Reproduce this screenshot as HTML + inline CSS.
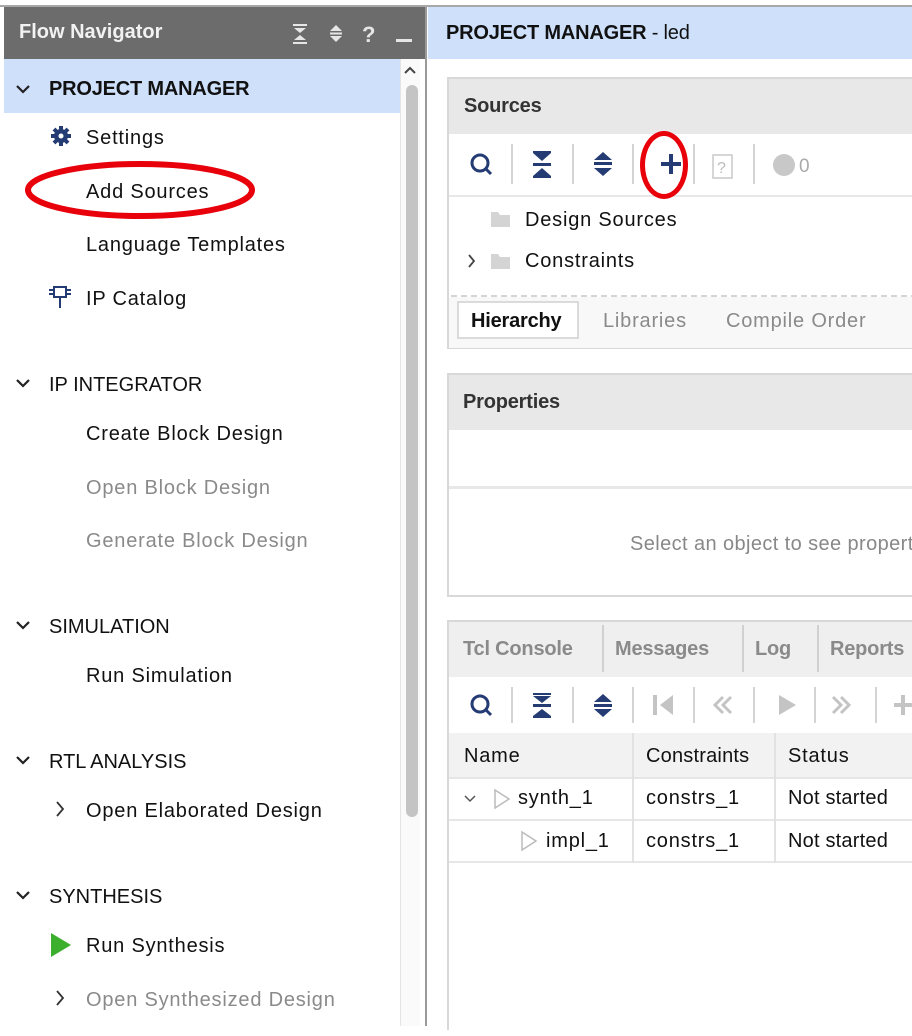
<!DOCTYPE html>
<html><head><style>
*{margin:0;padding:0;box-sizing:border-box}
body{width:912px;height:1036px;background:#fff;position:relative;overflow:hidden;font-family:"Liberation Sans",sans-serif;color:#111}
.a{position:absolute;white-space:nowrap}
.t{font-size:20px;letter-spacing:0.8px}
.b{font-weight:bold;letter-spacing:-0.2px}
.g{color:#8a8a8a}
</style></head><body>
<div class="a" style="left:0;top:5px;width:912px;height:2px;background:#a8a8a8"></div>
<div class="a" style="left:4px;top:7px;width:423px;height:52px;background:#6c6c6c"></div>
<div class="a" style="left:19px;top:21px;font-size:20px;font-weight:bold;color:#f2f2f2">Flow Navigator</div>
<svg class="a" style="left:290px;top:22px" width="130" height="24">
<g fill="#e6e6e6"><rect x="3" y="2" width="14" height="2"/><polygon points="4,6 16,6 10,11"/><polygon points="4,18 16,18 10,13"/><rect x="3" y="20" width="14" height="2"/>
<polygon points="46,3 52,9 40,9"/><rect x="40" y="10.5" width="12" height="2"/><polygon points="46,20 52,14 40,14"/></g>
<text x="72" y="20" font-size="22" font-weight="bold" fill="#e6e6e6" font-family="Liberation Sans">?</text>
<rect x="106" y="17" width="16" height="3" fill="#e6e6e6"/></svg>
<div class="a" style="left:4px;top:59px;width:396px;height:54px;background:#cfe0fb"></div>
<div class="a" style="left:400px;top:59px;width:20px;height:970px;background:#fafafa;border-left:1px solid #e4e4e4"></div>
<div class="a" style="left:406px;top:85px;width:12px;height:732px;border-radius:6px;background:#c4c4c4"></div>
<svg class="a" style="left:402px;top:64px" width="16" height="12"><polyline points="3,9 8,4 13,9" fill="none" stroke="#444" stroke-width="2"/></svg>
<div class="a" style="left:425px;top:7px;width:2px;height:1022px;background:#9a9a9a"></div>
<svg class="a" style="left:0;top:0" width="400" height="1036">
<g fill="none" stroke="#222" stroke-width="2.2">
<polyline points="17,86 23,92 29,86"/><polyline points="17,380 23,386 29,380"/><polyline points="17,622 23,628 29,622"/><polyline points="17,757 23,763 29,757"/><polyline points="17,892 23,898 29,892"/>
</g>
<g fill="none" stroke="#333" stroke-width="1.8"><polyline points="57,802 63,809 57,816"/><polyline points="57,991 63,998 57,1005"/></g>
<polygon points="51,933 71,945 51,957" fill="#3cb02e"/>
<g fill="#243c73"><circle cx="61" cy="136" r="7"/><g stroke="#243c73" stroke-width="4"><line x1="61" y1="126" x2="61" y2="146"/><line x1="51" y1="136" x2="71" y2="136"/><line x1="54" y1="129" x2="68" y2="143"/><line x1="68" y1="129" x2="54" y2="143"/></g><circle cx="61" cy="136" r="2.5" fill="#fff"/></g>
<g fill="none" stroke="#243c73" stroke-width="2"><rect x="54" y="287" width="12" height="10"/><line x1="60" y1="297" x2="60" y2="308"/><line x1="49" y1="290" x2="54" y2="290"/><line x1="49" y1="294" x2="54" y2="294"/><line x1="66" y1="290" x2="71" y2="290"/><line x1="66" y1="294" x2="71" y2="294"/></g>
<ellipse cx="140" cy="190" rx="112" ry="26" fill="none" stroke="#e8000b" stroke-width="6"/>
</svg>
<div class="a t b" style="left:49px;top:78px">PROJECT MANAGER</div>
<div class="a t" style="left:86px;top:127px">Settings</div>
<div class="a t" style="left:86px;top:181px">Add Sources</div>
<div class="a t" style="left:86px;top:234px">Language Templates</div>
<div class="a t" style="left:86px;top:288px">IP Catalog</div>
<div class="a t" style="left:49px;top:374px;letter-spacing:0">IP INTEGRATOR</div>
<div class="a t" style="left:86px;top:423px">Create Block Design</div>
<div class="a t g" style="left:86px;top:477px">Open Block Design</div>
<div class="a t g" style="left:86px;top:530px">Generate Block Design</div>
<div class="a t" style="left:49px;top:616px;letter-spacing:0">SIMULATION</div>
<div class="a t" style="left:86px;top:665px">Run Simulation</div>
<div class="a t" style="left:49px;top:751px;letter-spacing:0">RTL ANALYSIS</div>
<div class="a t" style="left:86px;top:800px">Open Elaborated Design</div>
<div class="a t" style="left:49px;top:886px;letter-spacing:0">SYNTHESIS</div>
<div class="a t" style="left:86px;top:935px">Run Synthesis</div>
<div class="a t g" style="left:86px;top:989px">Open Synthesized Design</div>
<div class="a" style="left:0;top:1026px;width:430px;height:10px;background:#fff"></div>

<div class="a" style="left:428px;top:7px;width:484px;height:52px;background:#cfe0fb"></div>
<div class="a t b" style="left:446px;top:22px">PROJECT MANAGER <span style="font-weight:normal">- led</span></div>

<div class="a" style="left:447px;top:77px;width:470px;height:272px;border:2px solid #d8d8d8;background:#fff"></div>
<div class="a" style="left:449px;top:79px;width:463px;height:55px;background:#e8e8e8"></div>
<div class="a t b" style="left:464px;top:95px;color:#333">Sources</div>
<div class="a" style="left:449px;top:195px;width:463px;height:2px;background:#e8e8e8"></div>
<svg class="a" style="left:449px;top:134px" width="463" height="214">
<g stroke="#d4d4d4" stroke-width="2"><line x1="63" y1="10" x2="63" y2="50"/><line x1="124" y1="10" x2="124" y2="50"/><line x1="184" y1="10" x2="184" y2="50"/><line x1="245" y1="10" x2="245" y2="50"/><line x1="305" y1="10" x2="305" y2="50"/></g>
<g fill="none" stroke="#243c73" stroke-width="3"><circle cx="31" cy="29" r="8"/><line x1="37" y1="35" x2="42" y2="40"/></g>
<g fill="#243c73"><polygon points="84,19 102,19 93,27"/><rect x="84" y="29" width="18" height="3"/><polygon points="84,42 102,42 93,34"/><rect x="84" y="17" width="18" height="2"/><rect x="84" y="42" width="18" height="2"/>
<polygon points="154,18 163,26 145,26"/><rect x="145" y="28" width="18" height="3"/><polygon points="154,42 163,34 145,34"/>
<rect x="212" y="28" width="20" height="4"/><rect x="220" y="20" width="4" height="20"/></g>
<rect x="264" y="21" width="19" height="23" fill="none" stroke="#c8c8c8" stroke-width="1.5"/>
<text x="268" y="39" font-size="16" fill="#bbb" font-family="Liberation Sans">?</text>
<circle cx="335" cy="31" r="11" fill="#c8c8c8"/><text x="350" y="38" font-size="19" fill="#aaa" font-family="Liberation Sans">0</text>
<polyline points="20,121 25,127 20,133" fill="none" stroke="#444" stroke-width="1.8"/>
<g fill="#d4d4d4"><path d="M42,78 h7 l2,3 h10 v12 h-19z"/><path d="M42,120 h7 l2,3 h10 v12 h-19z"/></g>
<line x1="2" y1="162" x2="463" y2="162" stroke="#aaa" stroke-dasharray="6,4"/>
<rect x="0" y="163" width="463" height="51" fill="#f8f8f8"/>
<rect x="9" y="168" width="120" height="36" fill="#fff" stroke="#d0d0d0" stroke-width="1.5"/>
</svg>
<div class="a" style="left:640px;top:131px;width:48px;height:68px;border:5px solid #e8000b;border-radius:50%"></div>
<div class="a t" style="left:525px;top:209px">Design Sources</div>
<div class="a t" style="left:525px;top:250px">Constraints</div>
<div class="a t b" style="left:471px;top:310px">Hierarchy</div>
<div class="a t g" style="left:603px;top:310px">Libraries</div>
<div class="a t g" style="left:726px;top:310px">Compile Order</div>

<div class="a" style="left:447px;top:373px;width:470px;height:224px;border:2px solid #d8d8d8;background:#fff"></div>
<div class="a" style="left:449px;top:375px;width:463px;height:55px;background:#e8e8e8"></div>
<div class="a t b" style="left:463px;top:391px;color:#333">Properties</div>
<div class="a" style="left:449px;top:486px;width:463px;height:3px;background:#e8e8e8"></div>
<div class="a t" style="left:630px;top:533px;color:#888;letter-spacing:0.4px">Select an object to see properties</div>

<div class="a" style="left:447px;top:620px;width:470px;height:410px;border-left:2px solid #d8d8d8;border-top:2px solid #d8d8d8;background:#fff"></div>
<div class="a" style="left:449px;top:622px;width:463px;height:55px;background:#efefef"></div>
<div class="a" style="left:602px;top:625px;width:2px;height:47px;background:#d0d0d0"></div>
<div class="a" style="left:742px;top:625px;width:2px;height:47px;background:#d0d0d0"></div>
<div class="a" style="left:817px;top:625px;width:2px;height:47px;background:#d0d0d0"></div>
<div class="a t b" style="left:463px;top:638px;color:#8a8a8a">Tcl Console</div>
<div class="a t b" style="left:615px;top:638px;color:#8a8a8a">Messages</div>
<div class="a t b" style="left:755px;top:638px;color:#8a8a8a">Log</div>
<div class="a t b" style="left:830px;top:638px;color:#8a8a8a">Reports</div>
<svg class="a" style="left:449px;top:677px" width="463" height="56">
<g stroke="#d4d4d4" stroke-width="2"><line x1="63" y1="10" x2="63" y2="46"/><line x1="124" y1="10" x2="124" y2="46"/><line x1="184" y1="10" x2="184" y2="46"/><line x1="245" y1="10" x2="245" y2="46"/><line x1="305" y1="10" x2="305" y2="46"/><line x1="366" y1="10" x2="366" y2="46"/><line x1="427" y1="10" x2="427" y2="46"/></g>
<g fill="none" stroke="#243c73" stroke-width="3"><circle cx="31" cy="27" r="8"/><line x1="37" y1="33" x2="42" y2="38"/></g>
<g fill="#243c73"><rect x="84" y="16" width="18" height="2"/><polygon points="84,19 102,19 93,26"/><rect x="84" y="27" width="18" height="3"/><polygon points="84,39 102,39 93,32"/><rect x="84" y="39" width="18" height="2"/>
<polygon points="154,17 163,25 145,25"/><rect x="145" y="27" width="18" height="3"/><polygon points="154,40 163,32 145,32"/></g>
<g fill="#c4c4c4"><rect x="204" y="18" width="4" height="20"/><polygon points="224,18 224,38 211,28"/><polygon points="330,18 330,38 347,28"/><rect x="445" y="26" width="18" height="4"/><rect x="452" y="18" width="4" height="20"/></g>
<g fill="none" stroke="#c4c4c4" stroke-width="3"><polyline points="274,20 266,28 274,36"/><polyline points="282,20 274,28 282,36"/><polyline points="384,20 392,28 384,36"/><polyline points="392,20 400,28 392,36"/></g>
</svg>
<div class="a" style="left:449px;top:733px;width:463px;height:44px;background:#f2f2f2"></div>
<div class="a" style="left:449px;top:777px;width:463px;height:2px;background:#e6e6e6"></div>
<div class="a" style="left:449px;top:819px;width:463px;height:2px;background:#e6e6e6"></div>
<div class="a" style="left:449px;top:861px;width:463px;height:2px;background:#e6e6e6"></div>
<div class="a" style="left:632px;top:733px;width:2px;height:130px;background:#e2e2e2"></div>
<div class="a" style="left:774px;top:733px;width:2px;height:130px;background:#e2e2e2"></div>
<div class="a t" style="left:464px;top:745px">Name</div>
<div class="a t" style="left:646px;top:745px;letter-spacing:0.2px">Constraints</div>
<div class="a t" style="left:788px;top:745px">Status</div>
<svg class="a" style="left:449px;top:780px" width="120" height="80"><polyline points="16,16 21,21 26,16" fill="none" stroke="#555" stroke-width="1.5"/><polygon points="46,10 60,19 46,28" fill="none" stroke="#bbb" stroke-width="1.5"/><polygon points="73,52 87,61 73,70" fill="none" stroke="#bbb" stroke-width="1.5"/></svg>
<div class="a t" style="left:518px;top:787px">synth_1</div>
<div class="a t" style="left:546px;top:830px">impl_1</div>
<div class="a t" style="left:646px;top:787px">constrs_1</div>
<div class="a t" style="left:646px;top:830px">constrs_1</div>
<div class="a t" style="left:788px;top:787px;letter-spacing:0.2px">Not started</div>
<div class="a t" style="left:788px;top:830px;letter-spacing:0.2px">Not started</div>
</body></html>
